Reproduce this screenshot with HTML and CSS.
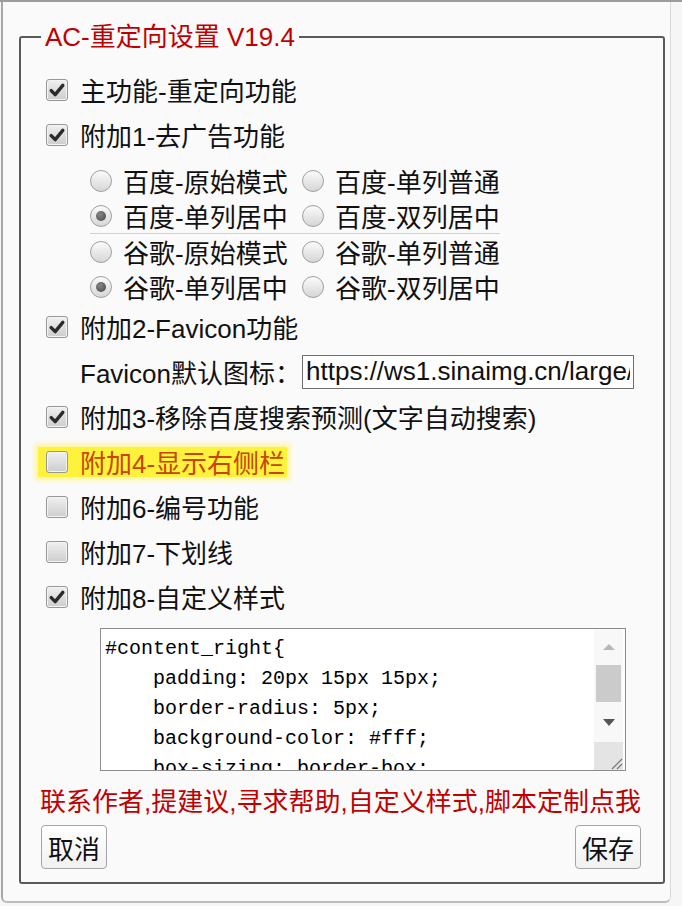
FILE: index.html
```html
<!DOCTYPE html>
<html lang="zh-CN">
<head>
    <meta charset="UTF-8">
    <title>AC-重定向设置</title>
    <link rel="stylesheet" href="styles.css">
</head>
<body>

<div class="dialog">
    <fieldset class="panel">
        <legend class="title">AC-重定向设置 V19.4</legend>

        <!-- Main switches -->
        <label class="row">
            <span class="check on"><svg viewBox="0 0 20 20" width="20" height="20"><path d="M4.2 10.6l4 4 7.6-9.2" fill="none" stroke="#2b2b2b" stroke-width="3.4" stroke-linecap="round" stroke-linejoin="round"/></svg></span>
            主功能-重定向功能
        </label>
        <label class="row">
            <span class="check on"><svg viewBox="0 0 20 20" width="20" height="20"><path d="M4.2 10.6l4 4 7.6-9.2" fill="none" stroke="#2b2b2b" stroke-width="3.4" stroke-linecap="round" stroke-linejoin="round"/></svg></span>
            附加1-去广告功能
        </label>

        <!-- Ad removal modes -->
        <div class="radios">
            <div class="radio-grid">
                <label class="opt"><span class="radio"></span>百度-原始模式</label>
                <label class="opt"><span class="radio"></span>百度-单列普通</label>
                <label class="opt"><span class="radio on"></span>百度-单列居中</label>
                <label class="opt"><span class="radio"></span>百度-双列居中</label>
            </div>
            <div class="radio-grid">
                <label class="opt"><span class="radio"></span>谷歌-原始模式</label>
                <label class="opt"><span class="radio"></span>谷歌-单列普通</label>
                <label class="opt"><span class="radio on"></span>谷歌-单列居中</label>
                <label class="opt"><span class="radio"></span>谷歌-双列居中</label>
            </div>
        </div>

        <label class="row">
            <span class="check on"><svg viewBox="0 0 20 20" width="20" height="20"><path d="M4.2 10.6l4 4 7.6-9.2" fill="none" stroke="#2b2b2b" stroke-width="3.4" stroke-linecap="round" stroke-linejoin="round"/></svg></span>
            附加2-Favicon功能
        </label>
        <div class="field">
            <span>Favicon默认图标：</span>
            <input class="url" type="text" value="https://ws1.sinaimg.cn/large/6a155794ly1g5sxdh9ewfj200w00w0si.jpg">
        </div>
        <label class="row">
            <span class="check on"><svg viewBox="0 0 20 20" width="20" height="20"><path d="M4.2 10.6l4 4 7.6-9.2" fill="none" stroke="#2b2b2b" stroke-width="3.4" stroke-linecap="round" stroke-linejoin="round"/></svg></span>
            附加3-移除百度搜索预测(文字自动搜索)
        </label>
        <div class="row">
            <label class="mark"><span class="check"></span>附加4-显示右侧栏</label>
        </div>
        <label class="row"><span class="check"></span>附加6-编号功能</label>
        <label class="row"><span class="check"></span>附加7-下划线</label>
        <label class="row">
            <span class="check on"><svg viewBox="0 0 20 20" width="20" height="20"><path d="M4.2 10.6l4 4 7.6-9.2" fill="none" stroke="#2b2b2b" stroke-width="3.4" stroke-linecap="round" stroke-linejoin="round"/></svg></span>
            附加8-自定义样式
        </label>

        <!-- Custom style editor -->
        <div class="editor">
<pre class="code">#content_right{
    padding: 20px 15px 15px;
    border-radius: 5px;
    background-color: #fff;
    box-sizing: border-box;</pre>
            <div class="scroll">
                <div class="btn-up"><span class="tri-up"></span></div>
                <div class="thumb"></div>
                <div class="btn-down"><span class="tri-down"></span></div>
                <div class="corner">
                    <svg viewBox="0 0 14 14" width="14" height="14"><path d="M13 3L3 13M13 8L8 13" stroke="#777" stroke-width="1.2"/></svg>
                </div>
            </div>
        </div>

        <p class="note">联系作者,提建议,寻求帮助,自定义样式,脚本定制点我</p>

        <div class="actions">
            <button class="btn">取消</button>
            <button class="btn">保存</button>
        </div>
    </fieldset>
</div>

</body>
</html>
```

FILE: styles.css
```css
body {
    margin: 0;
    border-top: 2px solid #9c9c9c;
    background: #f6f6f6;
    font-family: "Liberation Sans", "Noto Sans CJK SC", sans-serif;
    color: #111;
}

.dialog {
    box-sizing: border-box;
    width: 670px;
    height: 901px;
    margin-left: 1px;
    padding-top: 20px;
    border: 1px solid #dadada;
    border-top: none;
    border-left: 2px solid #a8a8a8;
    border-bottom: 2px solid #bdbdbd;
    border-radius: 0 0 6px 6px;
    background: #fafafa;
}

.panel {
    box-sizing: border-box;
    width: 646px;
    min-width: 0;
    margin: 0 0 0 16px;
    padding: 15px 22px 13px 25px;
    border: 2px solid #5a5a5a;
    border-radius: 3px;
}

.title {
    margin-left: -5px;
    padding: 0 4px;
    font-size: 26px;
    line-height: 30px;
    color: #c00000;
}

.row {
    display: flex;
    align-items: center;
    gap: 12px;
    height: 45px;
    font-size: 26px;
}

.check {
    box-sizing: border-box;
    width: 22px;
    height: 22px;
    flex: none;
    display: flex;
    align-items: center;
    justify-content: center;
    border: 1px solid #979797;
    border-radius: 3px;
    background: linear-gradient(#f0f0f0, #cdcdcd);
    box-shadow: inset 0 0 0 1px #f4f4f4;
}

.mark {
    display: flex;
    align-items: center;
    gap: 12px;
    height: 30px;
    margin-left: -8px;
    padding: 0 2px 0 8px;
    background: #fff23c;
    box-shadow: 0 0 5px 3px #fff59a;
    color: #c84400;
}

.radios {
    width: 410px;
    margin: 6px 0 0 44px;
}

.radio-grid {
    display: grid;
    grid-template-columns: 212px 198px;
}

.radio-grid + .radio-grid {
    border-top: 1px solid #d2d2d2;
}

.opt {
    display: flex;
    align-items: center;
    gap: 11px;
    height: 35px;
    font-size: 26px;
}

.radio {
    box-sizing: border-box;
    width: 22px;
    height: 22px;
    flex: none;
    display: flex;
    align-items: center;
    justify-content: center;
    border: 1px solid #a0a0a0;
    border-radius: 50%;
    background: linear-gradient(#fbfbfb, #d6d6d6);
}

.radio.on::after {
    content: "";
    width: 10px;
    height: 10px;
    border-radius: 50%;
    background: radial-gradient(circle at 40% 35%, #888, #444);
}

.field {
    display: flex;
    align-items: center;
    height: 45px;
    padding-left: 34px;
    font-size: 26px;
}

.url {
    box-sizing: border-box;
    width: 332px;
    height: 34px;
    margin-left: 1px;
    padding: 0 3px;
    border: 1px solid #6e6e6e;
    background: #fff;
    color: #111;
    font: 26px "Liberation Sans", sans-serif;
}

.editor {
    box-sizing: border-box;
    display: flex;
    width: 526px;
    height: 143px;
    margin: 9px 0 0 54px;
    border: 1px solid #8c8c8c;
    background: #fff;
}

.code {
    flex: 1;
    margin: 0;
    padding: 5px 4px;
    overflow: hidden;
    white-space: pre;
    font: 20px/30px "Liberation Mono", monospace;
    color: #000;
}

.scroll {
    width: 29px;
    margin-right: 2px;
    display: flex;
    flex-direction: column;
    background: #f8f8f8;
}

.btn-up, .btn-down {
    display: flex;
    align-items: center;
    justify-content: center;
}

.btn-up {
    height: 36px;
}

.btn-down {
    height: 40px;
}

.tri-up {
    border-left: 6px solid transparent;
    border-right: 6px solid transparent;
    border-bottom: 6px solid #b8b8b8;
}

.tri-down {
    border-left: 6px solid transparent;
    border-right: 6px solid transparent;
    border-top: 7px solid #555;
}

.thumb {
    height: 37px;
    margin: 0 2px;
    background: #cbcbcb;
}

.corner {
    flex: 1;
    display: flex;
    align-items: flex-end;
    justify-content: flex-end;
    background: #e4e4e4;
}

.note {
    margin: 16px 0 0 -6px;
    font-size: 26px;
    line-height: 30px;
    color: #c00000;
    white-space: nowrap;
}

.actions {
    display: flex;
    justify-content: space-between;
    margin: 8px 0 0 -5px;
}

.btn {
    height: 44px;
    padding: 0 6px;
    border: 1px solid #a5a5a5;
    border-radius: 4px;
    background: linear-gradient(#fff, #f1f1f1);
    color: #111;
    font: 26px "Liberation Sans", "Noto Sans CJK SC", sans-serif;
}
```
